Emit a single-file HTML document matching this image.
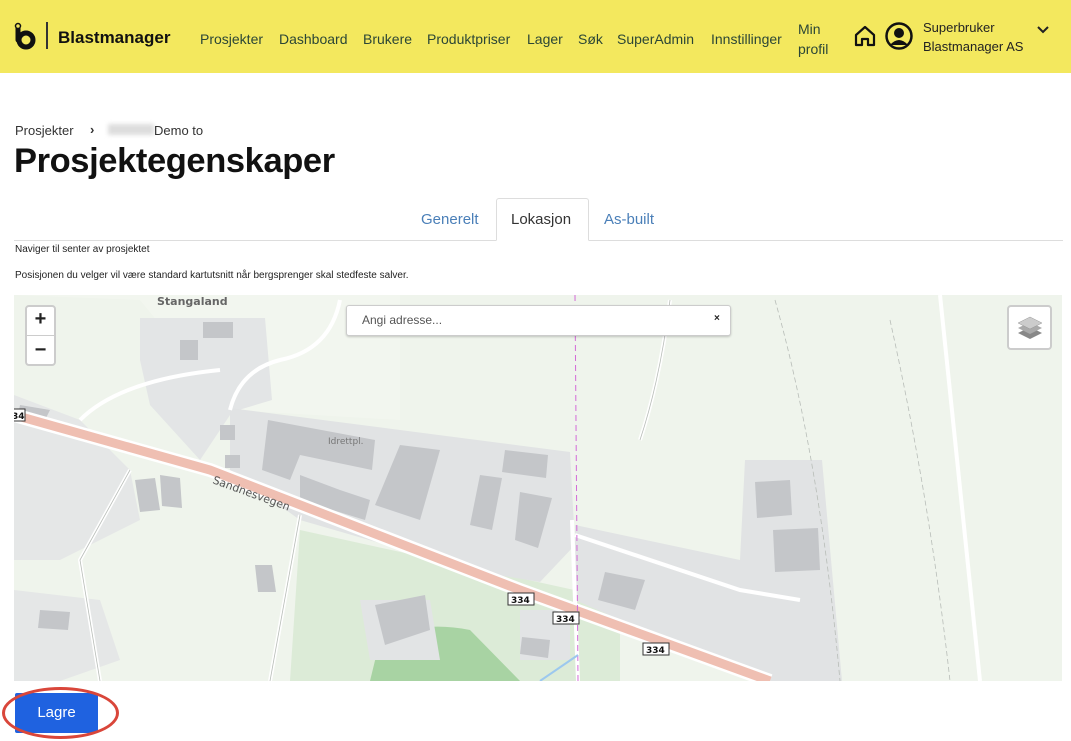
<!DOCTYPE html>
<html><head><meta charset="utf-8"><style>
*{margin:0;padding:0;box-sizing:border-box}
body{width:1071px;height:741px;overflow:hidden;background:#fff;font-family:"Liberation Sans",sans-serif;position:relative}
.hdr{position:absolute;left:0;top:0;width:1071px;height:73px;background:#f3e85e}
.nav a{position:absolute;top:31px;font-size:14px;color:#2b4636;text-decoration:none}
.abs{position:absolute}
</style></head><body>
<div class="hdr">
 <svg class="abs" style="left:13px;top:22px" width="26" height="28" viewBox="0 0 26 28"><path d="M5 5 v13" stroke="#111" stroke-width="5" stroke-linecap="round"/><circle cx="13" cy="18" r="7" fill="none" stroke="#111" stroke-width="5"/><circle cx="5" cy="4" r="2.5" fill="#f3e85e" stroke="#111" stroke-width="1.5"/></svg>
 <div class="abs" style="left:46px;top:22px;width:1.5px;height:27px;background:#333"></div>
 <div class="abs" style="left:58px;top:28px;font-size:17px;font-weight:bold;color:#111">Blastmanager</div>
 <div class="nav">
  <a style="left:200px">Prosjekter</a><a style="left:279px">Dashboard</a><a style="left:363px">Brukere</a><a style="left:427px">Produktpriser</a><a style="left:527px">Lager</a><a style="left:578px">Søk</a><a style="left:617px">SuperAdmin</a><a style="left:711px">Innstillinger</a>
  <a style="left:798px;top:19px;line-height:20px">Min<br>profil</a>
 </div>
 <svg class="abs" style="left:853px;top:24px" width="24" height="24" viewBox="0 0 24 24"><path d="M3 11 L12 3 L21 11 V21 H15 V15 H9 V21 H3 Z" fill="none" stroke="#111" stroke-width="2.2" stroke-linejoin="round"/></svg>
 <svg class="abs" style="left:884px;top:21px" width="30" height="30" viewBox="0 0 30 30"><circle cx="15" cy="15" r="12.5" fill="none" stroke="#111" stroke-width="2.5"/><circle cx="15" cy="12" r="5" fill="#111"/><path d="M6 24 Q15 14 24 24" fill="#111"/></svg>
 <div class="abs" style="left:923px;top:18px;font-size:13px;color:#222;line-height:19px">Superbruker<br>Blastmanager AS</div>
 <svg class="abs" style="left:1036px;top:25px" width="14" height="10" viewBox="0 0 14 10"><path d="M2 2 L7 7 L12 2" fill="none" stroke="#222" stroke-width="2"/></svg>
</div>
<div class="abs" style="left:15px;top:123px;font-size:13px;color:#333">Prosjekter</div>
<div class="abs" style="left:90px;top:122px;font-size:13px;font-weight:bold;color:#333">›</div>
<div class="abs" style="left:108px;top:124px;width:46px;height:11px;background:#ddd;filter:blur(2px)"></div>
<div class="abs" style="left:154px;top:123px;font-size:13px;color:#333">Demo to</div>
<div class="abs" style="left:14px;top:142px;font-size:34.5px;font-weight:bold;color:#111;letter-spacing:-0.4px">Prosjektegenskaper</div>
<div class="abs" style="left:14px;top:240px;width:1049px;height:1px;background:#ddd"></div>
<div class="abs" style="left:421px;top:211px;font-size:15px;color:#4a7fb8">Generelt</div>
<div class="abs" style="left:496px;top:198px;width:93px;height:43px;border:1px solid #ddd;border-bottom:1px solid #fff;background:#fff;border-radius:3px 3px 0 0"></div>
<div class="abs" style="left:511px;top:211px;font-size:15px;color:#333">Lokasjon</div>
<div class="abs" style="left:604px;top:211px;font-size:15px;color:#4a7fb8">As-built</div>
<div class="abs" style="left:15px;top:244px;font-size:10px;color:#222">Naviger til senter av prosjektet</div>
<div class="abs" style="left:15px;top:270px;font-size:10px;color:#222">Posisjonen du velger vil være standard kartutsnitt når bergsprenger skal stedfeste salver.</div>
<svg class="abs" style="left:14px;top:295px" width="1048" height="386" viewBox="14 295 1048 386">
 <rect x="14" y="295" width="1048" height="386" fill="#eff4ec"/>
 <path d="M14 295 H400 V420 L230 410 L140 300 Z" fill="#f2f6ef"/>
 <path d="M300 530 L620 600 L620 681 L290 681 Z" fill="#dcebd7"/>
 <path d="M380 640 Q420 620 470 630 L520 681 L370 681 Z" fill="#a8d3a3"/>
 <path d="M140 318 L265 318 L272 400 L232 412 L200 460 L150 405 L140 360 Z" fill="#e3e5e6"/>
 <path d="M230 408 L400 430 L570 452 L575 545 L540 582 L480 572 L300 520 L230 470 Z" fill="#e1e3e4"/>
 <path d="M575 525 L740 560 L745 460 L822 460 L842 681 L760 681 L575 600 Z" fill="#e1e3e4"/>
 <path d="M14 395 L80 420 L130 470 L140 520 L60 560 L14 560 Z" fill="#e5e7e7"/>
 <path d="M14 590 L100 600 L120 660 L60 681 L14 681 Z" fill="#e5e7e7"/>
 <path d="M360 600 L430 600 L440 660 L370 660 Z" fill="#e2e4e5"/>
 <path d="M520 610 L570 610 L570 660 L520 660 Z" fill="#e2e4e5"/>
 <g fill="#c4c6c9">
  <path d="M268 420 L375 440 L372 470 L300 455 L290 480 L262 470 Z"/>
  <path d="M300 475 L340 490 L370 500 L365 520 L300 500 Z"/>
  <path d="M400 445 L440 450 L420 520 L375 505 Z"/>
  <path d="M505 450 L548 455 L546 478 L502 472 Z"/>
  <path d="M480 475 L502 478 L492 530 L470 525 Z"/>
  <path d="M520 492 L552 498 L538 548 L515 540 Z"/>
  <path d="M755 482 L790 480 L792 515 L757 518 Z"/>
  <path d="M773 530 L818 528 L820 570 L775 572 Z"/>
  <path d="M605 572 L645 580 L635 610 L598 600 Z"/>
  <path d="M375 605 L425 595 L430 630 L385 645 Z"/>
  <path d="M522 637 L550 640 L548 658 L520 654 Z"/>
  <path d="M255 565 L272 565 L276 592 L258 592 Z"/>
  <path d="M135 480 L155 478 L160 510 L140 512 Z"/><path d="M160 475 L180 478 L182 508 L162 506 Z"/>
  <path d="M203 322 L233 322 L233 338 L203 338 Z"/><path d="M180 340 L198 340 L198 360 L180 360 Z"/>
  <path d="M20 405 L50 410 L45 420 L18 415 Z"/><path d="M40 610 L70 612 L68 630 L38 628 Z"/>
  <path d="M220 425 L235 425 L235 440 L220 440 Z"/><path d="M225 455 L240 455 L240 468 L225 468 Z"/>
 </g>
 <g fill="none" stroke="#fff" stroke-width="4">
  <path d="M300 515 L270 681"/><path d="M230 410 Q240 370 280 360 Q330 350 340 300"/><path d="M130 470 L80 560 L100 681"/>
  <path d="M572 520 L578 681"/><path d="M640 440 Q660 380 670 300"/><path d="M940 295 L980 681"/>
  <path d="M575 535 L740 590 L800 600"/><path d="M80 420 Q120 380 220 370"/>
 </g>
 <g fill="none" stroke="#b8bdb8" stroke-width="0.8">
  <path d="M300 515 L270 681"/><path d="M640 440 Q660 380 670 300"/><path d="M130 470 L80 560 L100 681"/>
  <path d="M775 300 Q820 460 840 681" stroke-dasharray="5 3"/><path d="M890 320 Q930 500 950 681" stroke-dasharray="5 3"/>
 </g>
 <path d="M14 415 L210 470 Q300 505 520 590 L770 681" fill="none" stroke="#fff" stroke-width="14"/>
 <path d="M14 415 L210 470 Q300 505 520 590 L770 681" fill="none" stroke="#efbfb2" stroke-width="9"/>
 <path d="M575 295 L578 681" stroke="#d36bd8" stroke-width="1" stroke-dasharray="6 4"/>
 <path d="M540 681 L578 655" stroke="#9cc8ee" stroke-width="2"/>
 <text x="157" y="305" font-size="11" font-weight="bold" fill="#666" font-family="DejaVu Sans">Stangaland</text>
 <text x="328" y="444" font-size="9" fill="#777" font-family="DejaVu Sans">Idrettpl.</text>
 <text x="212" y="483" font-size="11" fill="#555" font-family="DejaVu Sans" transform="rotate(20 212 483)">Sandnesvegen</text>
 <g font-size="9" font-weight="bold" font-family="DejaVu Sans" fill="#111">
  <rect x="508" y="593" width="26" height="12" fill="#fff" stroke="#333"/><text x="511" y="603">334</text>
  <rect x="553" y="612" width="26" height="12" fill="#fff" stroke="#333"/><text x="556" y="622">334</text>
  <rect x="643" y="643" width="26" height="12" fill="#fff" stroke="#333"/><text x="646" y="653">334</text>
  <rect x="10" y="409" width="15" height="12" fill="#fff" stroke="#333"/><text x="12" y="419">34</text>
 </g>
</svg>
<div class="abs" style="left:25px;top:305px;width:31px;height:61px;background:#fff;border:2px solid #ccc;border-radius:4px"></div>
<div class="abs" style="left:27px;top:335px;width:27px;height:1px;background:#ccc"></div>
<div class="abs" style="left:27px;top:308px;width:27px;text-align:center;font-size:20px;font-weight:bold;color:#222">+</div>
<div class="abs" style="left:27px;top:339px;width:27px;text-align:center;font-size:20px;font-weight:bold;color:#222">−</div>
<div class="abs" style="left:346px;top:305px;width:385px;height:31px;background:#fff;border:1px solid #ccc;border-radius:3px;box-shadow:0 1px 2px rgba(0,0,0,.2)"></div>
<div class="abs" style="left:362px;top:313px;font-size:12px;color:#555">Angi adresse...</div>
<div class="abs" style="left:714px;top:313px;font-size:10px;font-weight:bold;color:#222">×</div>
<div class="abs" style="left:1007px;top:305px;width:45px;height:45px;background:#fff;border:2px solid #ccc;border-radius:4px"></div>
<svg class="abs" style="left:1015px;top:313px" width="30" height="30" viewBox="0 0 30 30"><path d="M3 20 L15 26 L27 20 L15 14Z" fill="#888"/><path d="M3 15 L15 21 L27 15 L15 9Z" fill="#aaa"/><path d="M3 10 L15 16 L27 10 L15 4Z" fill="#ccc" stroke="#999" stroke-width=".5"/></svg>
<div class="abs" style="left:15px;top:693px;width:83px;height:40px;background:#1f62e0;border-radius:2px;color:#fff;font-size:15px;text-align:center;line-height:40px">Lagre</div>
<div class="abs" style="left:2px;top:687px;width:117px;height:52px;border:3px solid #d9463a;border-radius:50%"></div>
</body></html>
